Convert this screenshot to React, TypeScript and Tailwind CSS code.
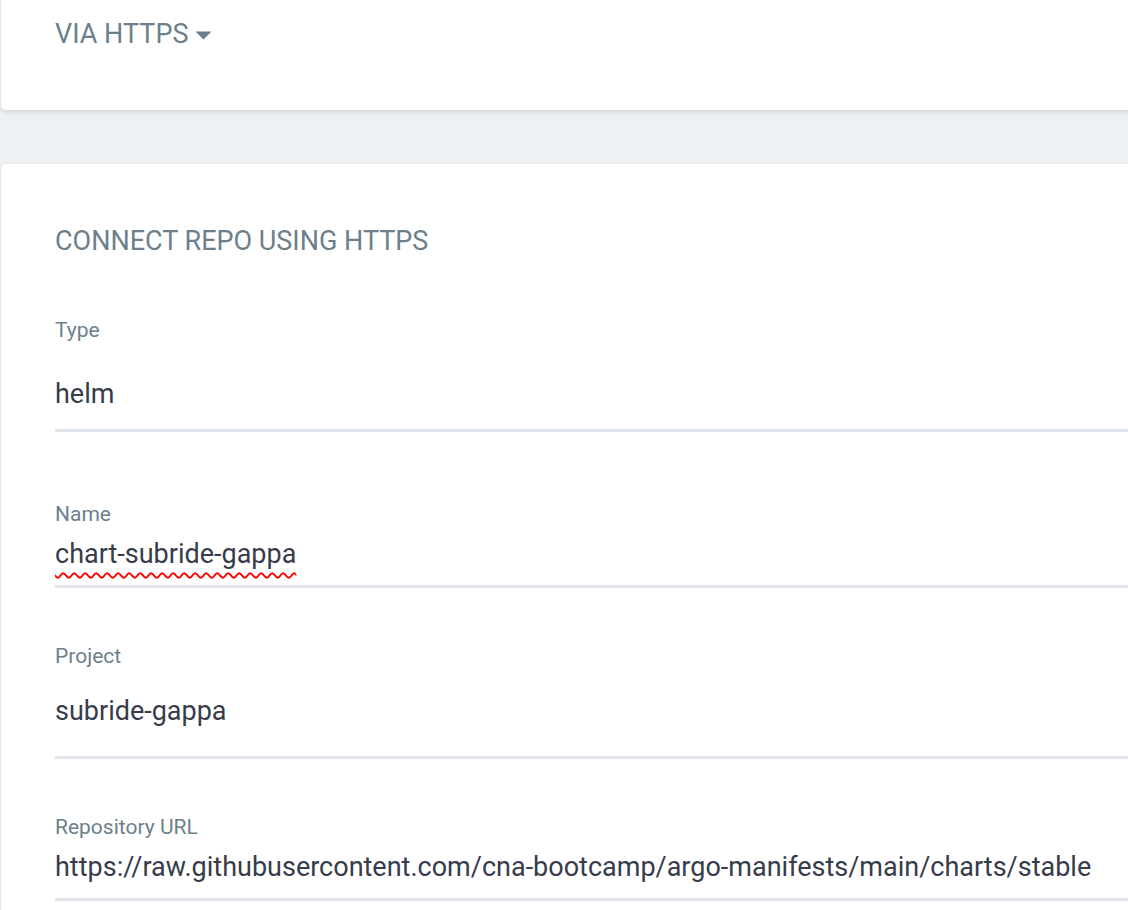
import React from "react";

const fields = [
  { label: "Type", value: "helm", gapLabel: "mt-[65px]", gapValue: "mt-[40px]", gapLine: "pb-[21px]" },
  { label: "Name", value: "chart-subride-gappa", gapLabel: "mt-[72px]", gapValue: "mt-[16px]", gapLine: "pb-[17px]", misspelled: true },
  { label: "Project", value: "subride-gappa", gapLabel: "mt-[58px]", gapValue: "mt-[31px]", gapLine: "pb-[31px]" },
  {
    label: "Repository URL",
    value: "https://raw.githubusercontent.com/cna-bootcamp/argo-manifests/main/charts/stable",
    gapLabel: "mt-[58px]",
    gapValue: "mt-[16px]",
    gapLine: "pb-[17px]",
  },
];

const App = () => {
  return (
    <div
      className="h-[910px] w-[1128px] overflow-hidden bg-[#eef1f4]"
      style={{ fontFamily: "Roboto, 'Noto Sans', sans-serif" }}
    >
      {/* top card */}
      <div className="ml-px h-[110px] w-[1200px] rounded-b-[5px] bg-white pl-[54px] pt-[21px] shadow-[0_2px_5px_rgba(0,0,0,0.12)]">
        <div className="flex items-center text-[27px] leading-[27px] text-[#6d7f8b]">
          <span>VIA HTTPS</span>
          <svg className="ml-[7px] mt-[2px]" width="17" height="9" viewBox="0 0 17 9">
            <path d="M0.5 0.5 H16.5 L8.5 8.5 Z" fill="#6d7f8b" />
          </svg>
        </div>
      </div>

      {/* connect card */}
      <div className="ml-px mt-[54px] h-[800px] w-[1200px] rounded-t-[5px] bg-white pl-[54px] pt-[64px] shadow-[0_2px_5px_rgba(0,0,0,0.12)]">
        <h2 className="text-[27px] font-normal leading-[27px] text-[#6d7f8b]">CONNECT REPO USING HTTPS</h2>
        {fields.map((f) => (
          <div key={f.label} className={`${f.gapLabel} border-b-[3px] border-[#dee4ea] ${f.gapLine}`}>
            <div className="text-[21px] leading-[21px] text-[#6d7f8b]">{f.label}</div>
            <div className={`${f.gapValue} text-[27px] leading-[27px] text-[#363c4a]`}>
              {f.misspelled ? (
                <span className="underline decoration-[#f00] decoration-wavy decoration-[1.5px] underline-offset-[9px]">
                  {f.value}
                </span>
              ) : (
                f.value
              )}
            </div>
          </div>
        ))}
      </div>
    </div>
  );
};

export default App;
